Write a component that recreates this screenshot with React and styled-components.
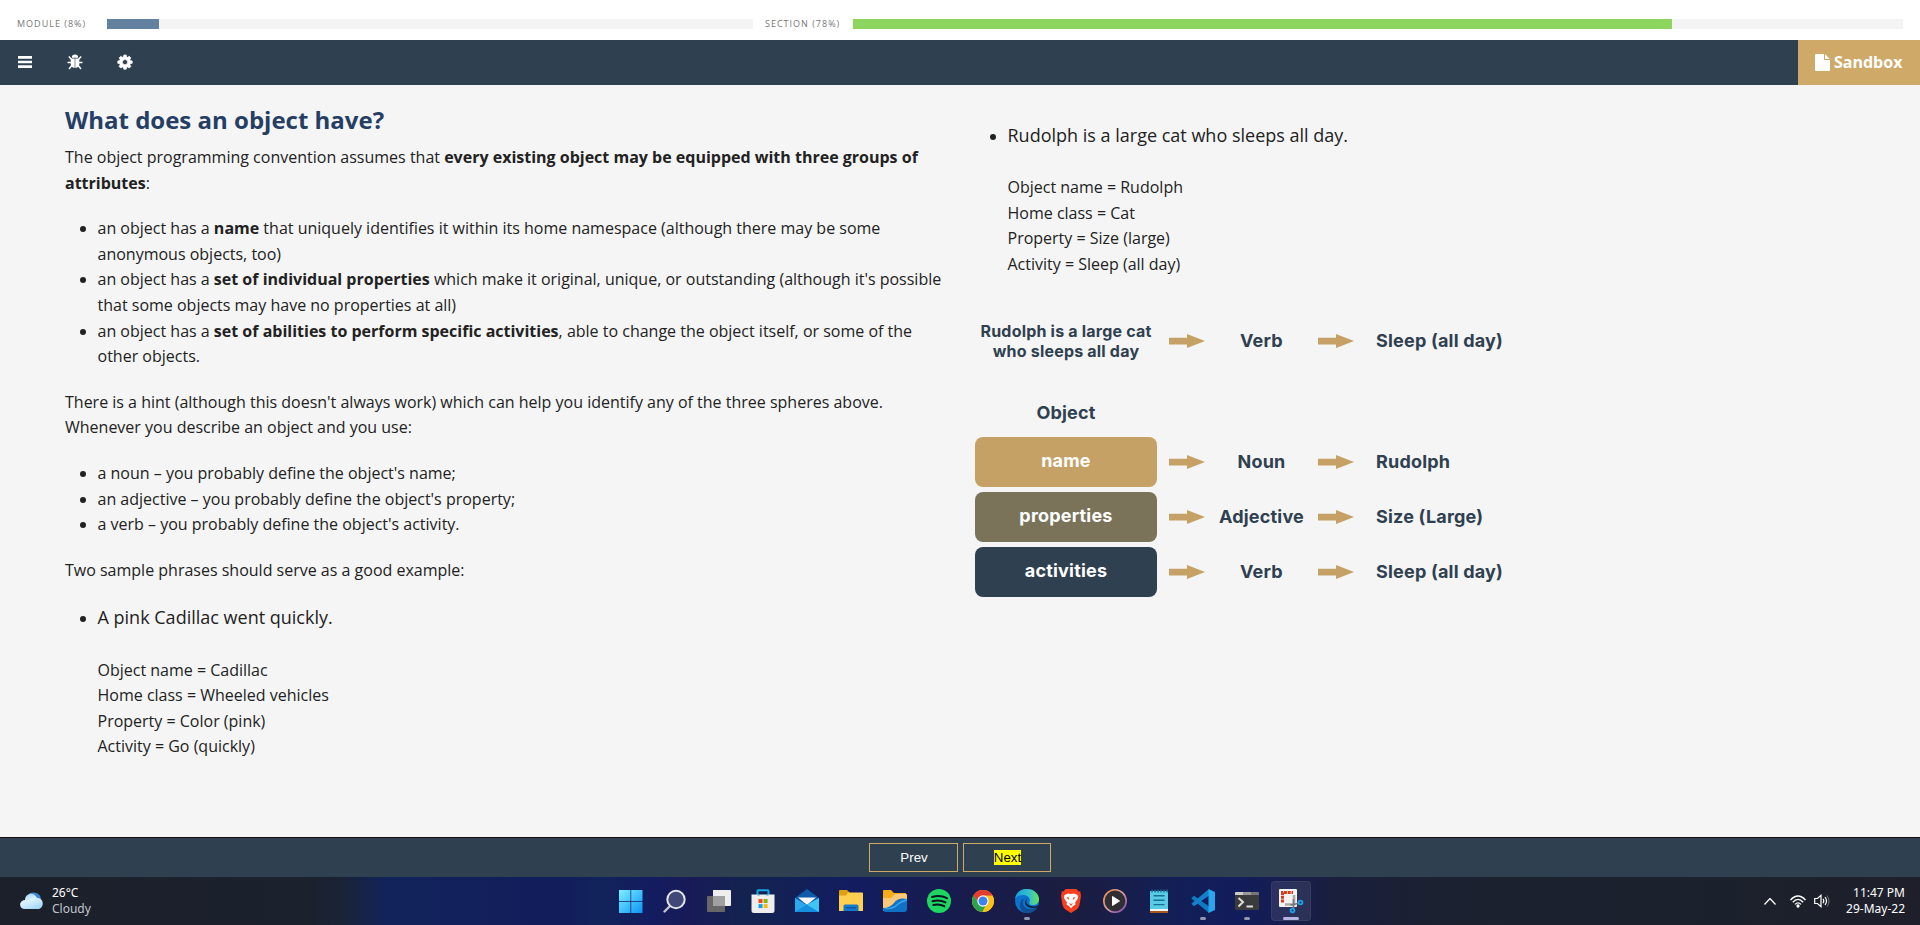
import React from "react";
import styled, { createGlobalStyle } from "styled-components";

const Global = createGlobalStyle`
  * { box-sizing: border-box; }
  body { margin: 0; background: #f5f5f5; font-family: "Open Sans", sans-serif; color: #222; overflow: hidden; }
`;
const Page = styled.div`display: flex; flex-direction: column; width: 1920px; height: 925px;`;

const ProgressHeader = styled.header`
  height: 40px; flex: none; background: #fff; display: flex; align-items: center;
  padding: 8px 17px 0 17px;
`;
const ProgressLabel = styled.span`
  width: ${(p) => p.$width}px; font-size: 9px; letter-spacing: 1px; line-height: 12px;
  color: #777; white-space: nowrap; flex: none;
`;
const Track = styled.div`
  height: 10px; width: ${(p) => p.$width}px; background: #f4f4f4; flex: none; margin-right: ${(p) => p.$gap || 0}px;
`;
const Fill = styled.div`height: 100%; width: ${(p) => p.$width}px; background: ${(p) => p.$color};`;

const Toolbar = styled.nav`
  height: 45px; flex: none; background: #2f4050; display: flex; align-items: stretch; justify-content: space-between;
`;
const Tools = styled.div`display: flex; align-items: center; gap: 34px; padding: 0 0 1px 17px;`;
const ToolIcon = styled.svg`width: 16px; height: 16px; display: block; fill: #fff;`;
const Sandbox = styled.button`
  width: 122px; border: 0; background: #cea968; color: #fff; padding: 0 0 1px 17px;
  display: flex; align-items: center; gap: 4px; font: 700 16px "Open Sans", sans-serif;
`;

const Content = styled.main`
  flex: 1; min-height: 0; display: grid; grid-template-columns: 880px 880px; column-gap: 30px;
  padding: 17px 65px 0; font-size: 16px; line-height: 25.6px;
`;
const Column = styled.section`padding-top: ${(p) => p.$top || 0}px;`;
const Title = styled.h1`margin: 0 0 8px; font-size: 24px; line-height: 35px; color: #253e66; font-weight: 700;`;
const Para = styled.p`margin: 0 0 20px;`;
const List = styled.ul`margin: 0 0 20px; padding-left: 32.5px;`;
const Phrase = styled.span`font-size: 18px; line-height: 28px;`;

const Diagram = styled.div`
  width: 560px; margin-top: 38px; font-family: Inter, sans-serif; font-weight: 700; letter-spacing: 0.2px; color: #2f4050;
`;
const DiagramRow = styled.div`
  display: grid; grid-template-columns: 182px 36px 89px 36px auto; column-gap: 12px; align-items: center;
  height: 50px; margin-bottom: ${(p) => p.$after || 5}px; font-size: 18px; line-height: 20px;
`;
const Sentence = styled.div`text-align: center; font-size: 16px; line-height: 20px; white-space: nowrap;`;
const Heading = styled.div`width: 182px; text-align: center; font-size: 18px; line-height: 22px; margin-bottom: 13px;`;
const Tag = styled.div`
  height: 50px; border-radius: 8px; background: ${(p) => p.$color}; color: #fff; text-align: center;
  line-height: 48px;
`;
const Kind = styled.div`text-align: center; white-space: nowrap;`;
const Value = styled.div`padding-left: 10px; white-space: nowrap;`;

const Footer = styled.footer`
  height: 40px; flex: none; background: #2f4050; border-top: 1px solid #111; display: flex;
  justify-content: center; padding-top: 5px; gap: 5px;
`;
const NavButton = styled.button`
  width: ${(p) => p.$width}px; height: 29px; background: transparent; border: 1px solid #cea968; color: #fff;
  padding: 0 0 0 1px; font: 400 13.33px/15px "Liberation Sans", sans-serif;
`;
const Mark = styled.mark`background: #ff0; color: #000;`;

const Taskbar = styled.div`
  height: 48px; flex: none; display: grid; grid-template-columns: 1fr auto 1fr; align-items: center; color: #fff;
  background: linear-gradient(90deg, #1c202b 0, #1b212d 310px, #1a2336 340px, #12235a 385px, #121d5c 560px, #12235a 600px,
    #131c60 650px, #181a58 690px, #13234f 745px, #121d60 850px, #181c4c 970px, #1b1d40 1070px, #121f57 1180px,
    #131c5c 1240px, #1a1f3c 1340px, #1b2130 1440px, #1b222d 1680px, #1e1f2a 1920px);
  font: 12px/16px "Noto Sans", sans-serif;
`;
const Weather = styled.div`display: flex; align-items: center; gap: 9px; padding-left: 20px;`;
const Dim = styled.div`color: #c3c5ca;`;
const Apps = styled.div`display: flex; gap: 4px; padding-left: 2px;`;
const AppTile = styled.div`
  width: 40px; height: 40px; display: flex; justify-content: center; align-items: center; position: relative; border-radius: 4px;
  background: ${(p) => (p.$active ? "rgba(255,255,255,.09)" : "transparent")};
  box-shadow: ${(p) => (p.$active ? "inset 0 0 0 1px rgba(255,255,255,.06)" : "none")};
`;
const Indicator = styled.i`
  position: absolute; bottom: 1px; left: 50%; transform: translateX(-50%); height: 3px; border-radius: 2px;
  width: ${(p) => (p.$active ? 16 : 6)}px; background: ${(p) => (p.$active ? "#b9b4e6" : "#9297ac")};
`;
const Tray = styled.div`display: flex; justify-content: flex-end; align-items: center; padding-right: 15px;`;
const TrayIcon = styled.svg`display: block; flex: none; margin-right: ${(p) => p.$gap}px;`;
const Clock = styled.div`text-align: right; width: 62px; white-space: nowrap;`;

const Arrow = () => (
  <svg width="36" height="14" viewBox="0 0 36 14"><path d="M0 3.7H18V0L36 7 18 14v-3.5H0z" fill="#c5a165" /></svg>
);

const diagram = [
  { tag: "name", color: "#c5a165", kind: "Noun", value: "Rudolph" },
  { tag: "properties", color: "#7b725a", kind: "Adjective", value: "Size (Large)" },
  { tag: "activities", color: "#2f4050", kind: "Verb", value: "Sleep (all day)" },
];

const icons = {
  start: <><defs><linearGradient id="win" x1="0" y1="0" x2="1" y2="1"><stop stopColor="#7ef0ff" /><stop offset="1" stopColor="#0a93f5" /></linearGradient></defs>
    <path fill="url(#win)" d="M0 1h11.500v11H0zM12.200 1h11.300v11H12.200zM0 12.800h11.500V24H0zM12.200 12.800h11.300V24H12.200z" /></>,
  search: <><path d="M7 17 1.500 22.500" stroke="#c3c4ce" strokeWidth="2.400" strokeLinecap="round" /><circle cx="13" cy="10.500" r="8.700" fill="#414877" stroke="#e4e5ed" strokeWidth="2" /></>,
  tasks: <><path d="M6 1h17a1 1 0 0 1 1 1v14a1 1 0 0 1-1 1H6z" fill="#eee" /><path d="M1 7h17v15a1 1 0 0 1-1 1H1a1 1 0 0 1-1-1V8a1 1 0 0 1 1-1z" fill="#676767" /><path d="M6 7h12v10H6z" fill="#a0a0a0" /></>,
  store: <><path d="M6.500 7V2q0-.7.7-.7h9.600q.7 0 .7.700v5" fill="none" stroke="#16a6e6" strokeWidth="2" /><path d="M.5 5.500h23v16q0 2.500-2.500 2.500H3q-2.500 0-2.500-2.500z" fill="#eee" />
    <path d="M6.500 5.500h2v1h-2zM15.500 5.500h2v1h-2z" fill="#16a6e6" />
    <path d="M7.500 10h4v4h-4z" fill="#ef4b21" /><path d="M12.600 10h4v4h-4z" fill="#7cb80d" /><path d="M7.500 15.100h4v4h-4z" fill="#0da2e9" /><path d="M12.600 15.100h4v4h-4z" fill="#fdb80d" /></>,
  mail: <><path d="M0 9 12 0l12 9v5H0z" fill="#0b5cab" /><path d="M3 8.500h18L12 16z" fill="#f5f6f7" /><path d="m0 9 12 7 12-7v14H0z" fill="#2aa9ec" /><path d="M0 23 12 15.500 24 23z" fill="#158fe0" /><path d="m24 9-12 6.800L24 23z" fill="#3ec5f5" /></>,
  folder: <><path d="M0 2q0-1 1-1h7l3 3v4H0z" fill="#dfa10c" /><path d="M9 3.500h14q1 0 1 1V22H0V6.500h7z" fill="#ffd04f" /><path d="M4.500 22v-5q0-1.500 1.500-1.500h12q1.500 0 1.500 1.500v5z" fill="#1579cf" /><path d="M7 18h10v1.500H7z" fill="#0a5ba4" /></>,
  files: <><path d="M0 2q0-1 1-1h7l3 3h12v6H0z" fill="#f7ad19" /><path d="M0 9h8l4-4h11q1 0 1 1v10L0 22z" fill="#fac878" /><path d="M0 19q7 0 11-5 4-6 13-4v10q0 3-3 3H3q-3 0-3-3z" fill="#0f72c5" /><path d="M0 19q9 1 14-4 4-4 10-5v2q-6 1-10 5-5 4-12 3z" fill="#38a2ec" /></>,
  spotify: <><circle cx="12" cy="12" r="12" fill="#1ed760" /><path d="M5 8q8-2.400 15 1.200M5.500 12.200q7-2 13 1.200M6.300 16q6-1.500 11 1.200" fill="none" stroke="#0b1420" strokeWidth="2" strokeLinecap="round" /></>,
  chrome: <><circle cx="12" cy="12" r="11" fill="#fbc116" /><path d="M2.500 6.500A11 11 0 0 1 21.600 6.700H12L8 14z" fill="#e53c30" /><path d="M2.500 6.500A11 11 0 0 0 11.500 23l4.500-9H8z" fill="#2da24c" /><path d="M12 6.700h9.600A11 11 0 0 1 11.500 23L16 14z" fill="#fbc116" /><circle cx="12" cy="12" r="5.700" fill="#fff" /><circle cx="12" cy="12" r="4.500" fill="#3c82f1" /></>,
  edge: <><defs><linearGradient id="edgeTop"><stop stopColor="#1b9de2" /><stop offset=".6" stopColor="#35c1c9" /><stop offset="1" stopColor="#67e35a" /></linearGradient></defs>
    <circle cx="12" cy="12" r="12" fill="#0b73cd" /><path d="M0 10C1 3 6 0 12 0c7 0 12 5 12 10 0 4-3 6-6 6-4 0-4-2-3-4 0-4-3-6-7-6-4 0-7 2-8 4z" fill="url(#edgeTop)" /><path d="M9 10c-3 4 0 10 6 10 3 0 5-1 8-3-2 4-6 7-11 7C6 24 3 17 6 12c1-2 4-3 6-2z" fill="#104f94" /><path d="M13 9.500c-3 2-2 6.500 3 7.500 3 1 6 0 8-1l-1 2c-5 2.500-12 .5-13-4 0-2 1-4 3-4.500z" fill="#16213c" /></>,
  brave: <><path d="M6.500 0h11l2 2.500 1.700-.2L22 7l-1.500 9q-1 3-3 4.500L12 24l-5.500-3.500q-2-1.500-3-4.500L2 7l.8-4.700 1.700.2z" fill="#f9401e" /><path d="m5.500 6 3.500-1.500 3 .6 3-.6L18.500 6l.6 3-3 4.500.4 2-3 2L12 19.500l-1.500-2-3-2 .5-2L5 9z" fill="#fff" /><path d="m7.500 8 2.700.8-.7 2.200zM16.500 8l-2.700.8.700 2.200zM10 14l2 1 2-1-2 3z" fill="#f9401e" /></>,
  media: <><defs><linearGradient id="ring" x1="0" y1="0" x2="1" y2="1"><stop stopColor="#f58b3d" /><stop offset=".5" stopColor="#d69b9d" /><stop offset="1" stopColor="#8247bf" /></linearGradient></defs><circle cx="12" cy="12" r="11.200" fill="#303034" stroke="url(#ring)" strokeWidth="1.600" /><path d="m9.500 7.500 7 4.500-7 4.500z" fill="#fff" stroke="#fff" strokeLinejoin="round" /></>,
  notepad: <><path d="M3 2h18v19H3z" fill="#59cbe7" /><path d="M3 20h18v2H3z" fill="#f3f3ef" /><path d="M3 22h18v2H3z" fill="#a9561a" /><path d="M5 .5v3M8 .5v3M11 .5v3M14 .5v3M17 .5v3M20 .5v3M6.500 6.800h11M6.500 11.200h11M6.500 15.600h11" stroke="#176f91" strokeWidth="1.400" /></>,
  code: <><path d="M18 24 .3 9.300 3 6.800 18 17.500z" fill="#0e7cc4" /><path d="M18 0 .3 14.700 3 17.200 18 6.500z" fill="#1380cb" /><path d="m17.500 0 6.500 3v18l-6.500 3z" fill="#2ba6ee" /></>,
  terminal: <><path d="M0 4q0-1 1-1h22q1 0 1 1v16q0 1-1 1H1q-1 0-1-1z" fill="#3b3b3b" /><path d="M0 4q0-1 1-1h7v3H0z" fill="#ccc" /><path d="M8 3h8v3H8z" fill="#999" /><path d="M16 3h7q1 0 1 1v2h-8z" fill="#777" /><path d="m3.500 9 4.500 4-4.500 4.500M11.500 17.500h6.500" fill="none" stroke="#ddd" strokeWidth="2" /></>,
  snip: <><rect x="0" y="0" width="18" height="18" rx="1" fill="#f3f3f3" /><path d="M3.500 13.500V3.500H14" fill="none" stroke="#d83b18" strokeWidth="3" strokeDasharray="3 .8" /><path d="M6 15.500h9V6" fill="none" stroke="#aaa" strokeWidth="2.600" /><path d="M11.500 16 19 14.500M14.500 10v9" stroke="#777" strokeWidth="1.500" /><circle cx="21.500" cy="13.500" r="1.900" fill="none" stroke="#19a6ed" strokeWidth="1.800" /><circle cx="13.500" cy="21.500" r="1.900" fill="none" stroke="#19a6ed" strokeWidth="1.800" /></>,
};
const running = { edge: true, code: true, terminal: true, snip: true };

export default function App() {
  return (
    <Page>
      <Global />
      <ProgressHeader>
        <ProgressLabel $width={90}>MODULE (8%)</ProgressLabel>
        <Track $width={646} $gap={12}><Fill $width={52} $color="#6282a0" /></Track>
        <ProgressLabel $width={88}>SECTION (78%)</ProgressLabel>
        <Track $width={1050}><Fill $width={819} $color="#8dd55f" /></Track>
      </ProgressHeader>
      <Toolbar>
        <Tools>
          <ToolIcon viewBox="0 0 16 16"><path d="M1 2h14v2.700H1zM1 6.700h14v2.600H1zM1 11.300h14V14H1z" /></ToolIcon>
          <ToolIcon viewBox="0 0 16 16">
            <path d="M4.800 3.800a3.200 3.200 0 0 1 6.400 0zM3.700 4.600h4v9.400Q3.700 13.500 3.700 10zM8.300 4.600h4V10q0 3.500-4 4z" />
            <path d="m1.800 2.500 2.800 3M14.200 2.500l-2.800 3M.5 8.500h4M15.500 8.500h-4M2 15l2.800-3.500M14 15l-2.800-3.500" stroke="#fff" strokeWidth="1.500" />
          </ToolIcon>
          <ToolIcon viewBox="0 0 16 16"><path fillRule="evenodd" stroke="#fff" strokeWidth=".7" strokeLinejoin="round" d="M6.800 1h2.400l.4 1.900 1 .4 1.700-1 1.600 1.600-1 1.700.4 1 1.900.4v2.300l-1.900.4-.4 1 1 1.700-1.600 1.600-1.700-1-1 .4-.4 1.800H6.800l-.4-1.800-1-.4-1.700 1-1.600-1.600 1-1.700-.4-1L.8 9.300V7l1.900-.4.4-1-1-1.700 1.600-1.600 1.700 1 1-.4zM8 5.500a2.600 2.600 0 1 0 0 5.200 2.600 2.600 0 0 0 0-5.200z" /></ToolIcon>
        </Tools>
        <Sandbox>
          <svg width="15" height="17" viewBox="0 0 15 17" fill="#fff"><path d="M0 1q0-1 1-1h8v6h6v10q0 1-1 1H1q-1 0-1-1zM10 0l5 5h-5z" /></svg>
          Sandbox
        </Sandbox>
      </Toolbar>
      <Content>
        <Column>
          <Title>What does an object have?</Title>
          <Para>The object programming convention assumes that <b>every existing object may be equipped with three groups of attributes</b>:</Para>
          <List>
            <li>an object has a <b>name</b> that uniquely identifies it within its home namespace (although there may be some anonymous objects, too)</li>
            <li>an object has a <b>set of individual properties</b> which make it original, unique, or outstanding (although it's possible that some objects may have no properties at all)</li>
            <li>an object has a <b>set of abilities to perform specific activities</b>, able to change the object itself, or some of the other objects.</li>
          </List>
          <Para>There is a hint (although this doesn't always work) which can help you identify any of the three spheres above.<br />Whenever you describe an object and you use:</Para>
          <List>
            <li>a noun – you probably define the object's name;</li>
            <li>an adjective – you probably define the object's property;</li>
            <li>a verb – you probably define the object's activity.</li>
          </List>
          <Para>Two sample phrases should serve as a good example:</Para>
          <List>
            <li><Phrase>A pink Cadillac went quickly.</Phrase><br /><br />Object name = Cadillac<br />Home class = Wheeled vehicles<br />Property = Color (pink)<br />Activity = Go (quickly)</li>
          </List>
        </Column>
        <Column $top={19}>
          <List>
            <li><Phrase>Rudolph is a large cat who sleeps all day.</Phrase><br /><br />Object name = Rudolph<br />Home class = Cat<br />Property = Size (large)<br />Activity = Sleep (all day)</li>
          </List>
          <Diagram>
            <DiagramRow $after={36}>
              <Sentence>Rudolph is a large cat<br />who sleeps all day</Sentence>
              <Arrow /><Kind>Verb</Kind><Arrow /><Value>Sleep (all day)</Value>
            </DiagramRow>
            <Heading>Object</Heading>
            {diagram.map((r) => (
              <DiagramRow key={r.tag}>
                <Tag $color={r.color}>{r.tag}</Tag>
                <Arrow /><Kind>{r.kind}</Kind><Arrow /><Value>{r.value}</Value>
              </DiagramRow>
            ))}
          </Diagram>
        </Column>
      </Content>
      <Footer>
        <NavButton $width={89}>Prev</NavButton>
        <NavButton $width={88}><Mark>Next</Mark></NavButton>
      </Footer>
      <Taskbar>
        <Weather>
          <svg width="23" height="18" viewBox="0 0 23 18">
            <defs><linearGradient id="cloud" x1="0" y1="0" x2=".6" y2="1"><stop stopColor="#8cc6f5" /><stop offset=".5" stopColor="#ddf3ff" /><stop offset="1" stopColor="#a9d9f8" /></linearGradient></defs>
            <path d="M10 1c6-2 11 1 11 7l-5 4-7-9z" fill="#3f87d3" />
            <path d="M5 17c-7 0-6-9 0-9C5 1 14-1 17 6c8 0 7 11 1 11z" fill="url(#cloud)" />
          </svg>
          <div><div>26°C</div><Dim>Cloudy</Dim></div>
        </Weather>
        <Apps>
          {Object.entries(icons).map(([name, art]) => (
            <AppTile key={name} $active={name === "snip"}>
              <svg width="24" height="24" viewBox="0 0 24 24" overflow="visible">{art}</svg>
              {running[name] && <Indicator $active={name === "snip"} />}
            </AppTile>
          ))}
        </Apps>
        <Tray>
          <TrayIcon $gap={14} width="12" height="7" viewBox="0 0 12 7" fill="none" stroke="#fff" strokeWidth="1.300"><path d="m.5 6.500 5.500-6 5.500 6" /></TrayIcon>
          <TrayIcon $gap={8} width="16" height="13" viewBox="0 0 16 13" fill="none" stroke="#fff" strokeWidth="1.300"><path d="M.5 5q7.500-8 15 0M2.800 7.200q5.200-5.600 10.400 0M5 9.400q3-3.200 6 0" /><circle cx="8" cy="11" r="1" fill="#fff" /></TrayIcon>
          <TrayIcon $gap={13} width="16" height="14" viewBox="0 0 16 14" fill="none" stroke="#fff" strokeWidth="1.200"><path d="M.7 4.500h2.800L7 1.300v11.400L3.500 9.500H.7zM9 4.800q1.500 2.200 0 4.400M11 3q3 4 0 8" /><path d="M13 1.500q4 5.500 0 11" stroke="#666" /></TrayIcon>
          <Clock>11:47 PM<br />29-May-22</Clock>
        </Tray>
      </Taskbar>
    </Page>
  );
}
